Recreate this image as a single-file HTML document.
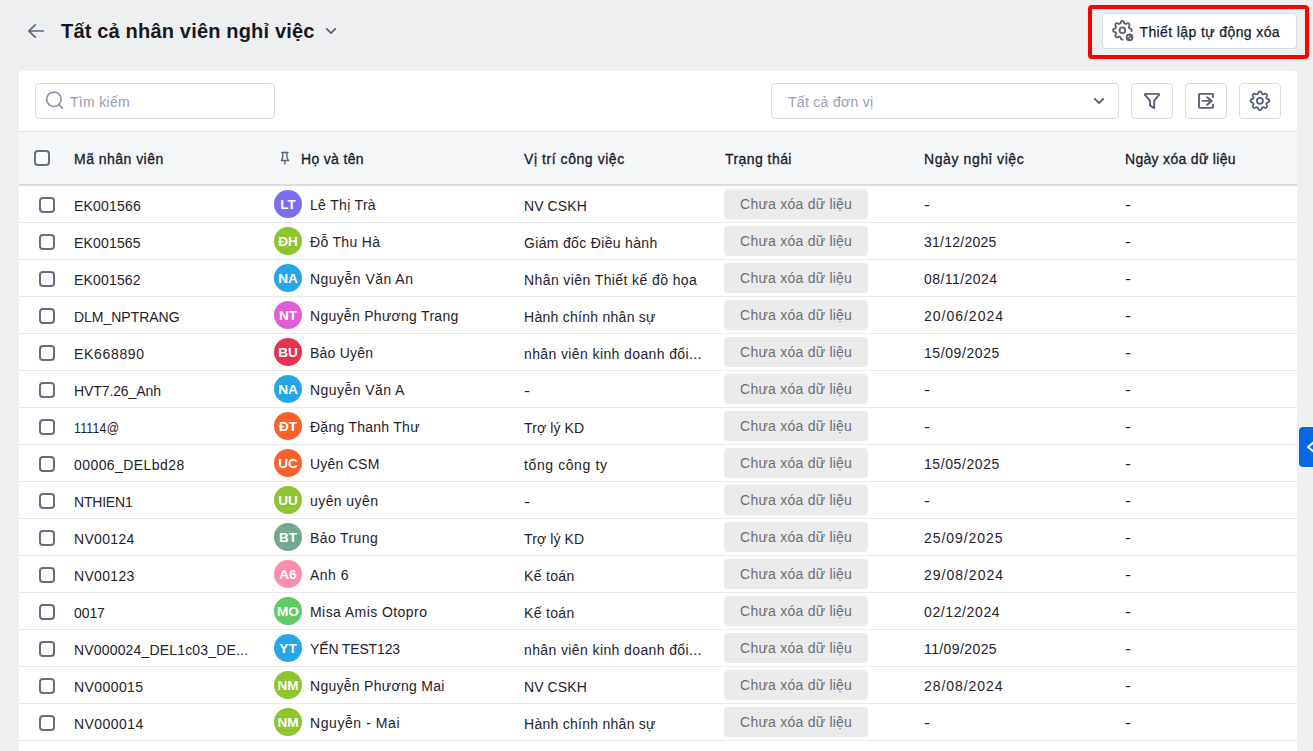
<!DOCTYPE html>
<html lang="vi">
<head>
<meta charset="utf-8">
<title>Tất cả nhân viên nghỉ việc</title>
<style>
*{box-sizing:border-box;margin:0;padding:0}
html,body{width:1313px;height:751px;overflow:hidden}
body{background:#eeeff1;font-family:"Liberation Sans",sans-serif;color:#1f2229;font-size:14px;position:relative}
.abs{position:absolute}
.title{left:61px;top:18px;font-size:20px;font-weight:bold;color:#16181d;line-height:26px;white-space:nowrap;letter-spacing:0.18px}
.redbox{left:1088px;top:5px;width:221px;height:54px;border:4px solid #fe0000;border-radius:4px}
.btn-auto{left:1102px;top:13px;width:195px;height:36px;background:#fff;border:1px solid #d9dbe3;border-radius:4px}
.btn-auto span{position:absolute;left:36.5px;top:10px;font-size:14px;line-height:17px;color:#171b2a;white-space:nowrap;letter-spacing:.39px;-webkit-text-stroke:.25px #171b2a}
.card{left:19px;top:71px;width:1278px;height:700px;background:#fff;border-radius:4px 4px 0 0;overflow:hidden}
.search{left:16px;top:12px;width:240px;height:36px;border:1px solid #d9dbe3;border-radius:4px;background:#fff}
.search span{position:absolute;left:34px;top:10px;color:#9a9eb3;font-size:14px;line-height:17px;letter-spacing:.3px}
.select{left:752px;top:12px;width:348px;height:36px;border:1px solid #d9dbe3;border-radius:4px;background:#fff}
.select span{position:absolute;left:16px;top:10px;color:#9a9eb3;font-size:14px;line-height:17px;letter-spacing:.3px}
.ib{top:12px;width:42px;height:36px;border:1px solid #d9dbe3;border-radius:4px;background:#fff}
.thead{left:0;top:60px;width:1278px;height:55px;background:#f5f6f8;border-top:1px solid #dfe0e8;border-bottom:2px solid #d9dbe3}
.th{position:absolute;top:19px;font-size:14px;line-height:17px;font-weight:normal;color:#171b2a;white-space:nowrap;letter-spacing:.42px;-webkit-text-stroke:.3px #171b2a}
.cb{position:absolute;width:16px;height:16px;border:2px solid #676d81;border-radius:4px;background:#fff}
.row{position:absolute;left:0;width:1278px;height:37px;border-bottom:1px solid #e8e9ef}
.row span{position:absolute;top:11px;line-height:17px;white-space:nowrap;letter-spacing:.35px;color:#1f2229}
.row .c1{left:55px;top:12px}
.row .c2{left:291px}
.row .c3{left:505px;top:12px}
.row .c5{left:905px}
.row .c6{left:1106px}
.row .d{transform:scaleX(1.3);transform-origin:0 50%}
.av{position:absolute;left:255px;top:4px;width:28px;height:28px;border-radius:50%;color:#fff;font-size:13.6px;font-weight:bold;text-align:center;line-height:29.4px;overflow:hidden}
.tag{position:absolute;left:705px;top:3px;width:144px;height:30px;border-radius:4px;background:#ebebeb;color:#6b6e76;text-align:center;line-height:30px;letter-spacing:.24px;text-indent:.24px}
.tab{left:1299px;top:427px;width:20px;height:40px;background:#0768e4;border-radius:4px 0 0 4px;box-shadow:0 0 0 1px rgba(255,255,255,.55)}
</style>
</head>
<body>
<div class="abs title">Tất cả nhân viên nghỉ việc</div>
<div class="abs redbox"></div>
<div class="abs btn-auto"><span>Thiết lập tự động xóa</span></div>
<div class="abs card">
  <div class="abs search"><span>Tìm kiếm</span></div>
  <div class="abs select"><span>Tất cả đơn vị</span></div>
  <div class="abs ib" style="left:1112px"></div>
  <div class="abs ib" style="left:1166px"></div>
  <div class="abs ib" style="left:1220px"></div>
  <div class="abs thead">
    <div class="cb" style="left:15px;top:18px"></div>
    <div class="th" style="left:55px;letter-spacing:0.47px">Mã nhân viên</div>
    <div class="th" style="left:282px;letter-spacing:0.33px">Họ và tên</div>
    <div class="th" style="left:505px;letter-spacing:0.56px">Vị trí công việc</div>
    <div class="th" style="left:706px;letter-spacing:0.44px">Trạng thái</div>
    <div class="th" style="left:905px;letter-spacing:0.61px">Ngày nghỉ việc</div>
    <div class="th" style="left:1106px;letter-spacing:0.31px">Ngày xóa dữ liệu</div>
  </div>
    <div class="row" style="top:115px"><div class="cb" style="left:20px;top:11px"></div><span class="c1" style="letter-spacing:0.20px">EK001566</span><div class="av" style="background:#7b6df0">LT</div><span class="c2" style="letter-spacing:0.32px">Lê Thị Trà</span><span class="c3" style="letter-spacing:0.09px">NV CSKH</span><div class="tag">Chưa xóa dữ liệu</div><span class="c5 d">-</span><span class="c6 d">-</span></div>
  <div class="row" style="top:152px"><div class="cb" style="left:20px;top:11px"></div><span class="c1" style="letter-spacing:0.17px">EK001565</span><div class="av" style="background:#8dc52f">ĐH</div><span class="c2" style="letter-spacing:0.32px">Đỗ Thu Hà</span><span class="c3" style="letter-spacing:0.33px">Giám đốc Điều hành</span><div class="tag">Chưa xóa dữ liệu</div><span class="c5" style="letter-spacing:0.25px">31/12/2025</span><span class="c6 d">-</span></div>
  <div class="row" style="top:189px"><div class="cb" style="left:20px;top:11px"></div><span class="c1" style="letter-spacing:0.17px">EK001562</span><div class="av" style="background:#26a6e9">NA</div><span class="c2" style="letter-spacing:0.47px">Nguyễn Văn An</span><span class="c3" style="letter-spacing:0.40px">Nhân viên Thiết kế đồ họa</span><div class="tag">Chưa xóa dữ liệu</div><span class="c5" style="letter-spacing:0.44px">08/11/2024</span><span class="c6 d">-</span></div>
  <div class="row" style="top:226px"><div class="cb" style="left:20px;top:11px"></div><span class="c1" style="letter-spacing:-0.02px">DLM_NPTRANG</span><div class="av" style="background:#e05fd9">NT</div><span class="c2" style="letter-spacing:0.29px">Nguyễn Phương Trang</span><span class="c3" style="letter-spacing:0.27px">Hành chính nhân sự</span><div class="tag">Chưa xóa dữ liệu</div><span class="c5" style="letter-spacing:0.99px">20/06/2024</span><span class="c6 d">-</span></div>
  <div class="row" style="top:263px"><div class="cb" style="left:20px;top:11px"></div><span class="c1" style="letter-spacing:0.67px">EK668890</span><div class="av" style="background:#e23452">BU</div><span class="c2" style="letter-spacing:0.21px">Bảo Uyên</span><span class="c3" style="letter-spacing:0.39px">nhân viên kinh doanh đổi...</span><div class="tag">Chưa xóa dữ liệu</div><span class="c5" style="letter-spacing:0.58px">15/09/2025</span><span class="c6 d">-</span></div>
  <div class="row" style="top:300px"><div class="cb" style="left:20px;top:11px"></div><span class="c1" style="letter-spacing:-0.10px">HVT7.26_Anh</span><div class="av" style="background:#26a6e9">NA</div><span class="c2" style="letter-spacing:0.45px">Nguyễn Văn A</span><span class="c3 d">-</span><div class="tag">Chưa xóa dữ liệu</div><span class="c5 d">-</span><span class="c6 d">-</span></div>
  <div class="row" style="top:337px"><div class="cb" style="left:20px;top:11px"></div><span class="c1" style="letter-spacing:.3px;transform:scaleX(.875);transform-origin:0 50%">11114@</span><div class="av" style="background:#f9622e">ĐT</div><span class="c2" style="letter-spacing:0.26px">Đặng Thanh Thư</span><span class="c3" style="letter-spacing:0.11px">Trợ lý KD</span><div class="tag">Chưa xóa dữ liệu</div><span class="c5 d">-</span><span class="c6 d">-</span></div>
  <div class="row" style="top:374px"><div class="cb" style="left:20px;top:11px"></div><span class="c1" style="letter-spacing:0.43px">00006_DELbd28</span><div class="av" style="background:#f9622e">UC</div><span class="c2" style="letter-spacing:0.24px">Uyên CSM</span><span class="c3" style="letter-spacing:0.60px">tổng công ty</span><div class="tag">Chưa xóa dữ liệu</div><span class="c5" style="letter-spacing:0.58px">15/05/2025</span><span class="c6 d">-</span></div>
  <div class="row" style="top:411px"><div class="cb" style="left:20px;top:11px"></div><span class="c1" style="letter-spacing:-0.20px">NTHIEN1</span><div class="av" style="background:#8dc52f">UU</div><span class="c2" style="letter-spacing:0.42px">uyên uyên</span><span class="c3 d">-</span><div class="tag">Chưa xóa dữ liệu</div><span class="c5 d">-</span><span class="c6 d">-</span></div>
  <div class="row" style="top:448px"><div class="cb" style="left:20px;top:11px"></div><span class="c1" style="letter-spacing:0.33px">NV00124</span><div class="av" style="background:#75a68e">BT</div><span class="c2" style="letter-spacing:0.39px">Bảo Trung</span><span class="c3" style="letter-spacing:0.11px">Trợ lý KD</span><div class="tag">Chưa xóa dữ liệu</div><span class="c5" style="letter-spacing:0.93px">25/09/2025</span><span class="c6 d">-</span></div>
  <div class="row" style="top:485px"><div class="cb" style="left:20px;top:11px"></div><span class="c1" style="letter-spacing:0.33px">NV00123</span><div class="av" style="background:#f98fab">A6</div><span class="c2" style="letter-spacing:0.48px">Anh 6</span><span class="c3" style="letter-spacing:0.32px">Kế toán</span><div class="tag">Chưa xóa dữ liệu</div><span class="c5" style="letter-spacing:0.99px">29/08/2024</span><span class="c6 d">-</span></div>
  <div class="row" style="top:522px"><div class="cb" style="left:20px;top:11px"></div><span class="c1" style="letter-spacing:-0.08px">0017</span><div class="av" style="background:#5fcc66">MO</div><span class="c2" style="letter-spacing:0.43px">Misa Amis Otopro</span><span class="c3" style="letter-spacing:0.32px">Kế toán</span><div class="tag">Chưa xóa dữ liệu</div><span class="c5" style="letter-spacing:0.61px">02/12/2024</span><span class="c6 d">-</span></div>
  <div class="row" style="top:559px"><div class="cb" style="left:20px;top:11px"></div><span class="c1" style="letter-spacing:0.17px">NV000024_DEL1c03_DE...</span><div class="av" style="background:#26a6e9">YT</div><span class="c2" style="letter-spacing:-0.15px">YẾN TEST123</span><span class="c3" style="letter-spacing:0.39px">nhân viên kinh doanh đổi...</span><div class="tag">Chưa xóa dữ liệu</div><span class="c5" style="letter-spacing:0.40px">11/09/2025</span><span class="c6 d">-</span></div>
  <div class="row" style="top:596px"><div class="cb" style="left:20px;top:11px"></div><span class="c1" style="letter-spacing:0.42px">NV000015</span><div class="av" style="background:#8dc52f">NM</div><span class="c2" style="letter-spacing:0.28px">Nguyễn Phương Mai</span><span class="c3" style="letter-spacing:0.09px">NV CSKH</span><div class="tag">Chưa xóa dữ liệu</div><span class="c5" style="letter-spacing:0.95px">28/08/2024</span><span class="c6 d">-</span></div>
  <div class="row" style="top:633px"><div class="cb" style="left:20px;top:11px"></div><span class="c1" style="letter-spacing:0.46px">NV000014</span><div class="av" style="background:#8dc52f">NM</div><span class="c2" style="letter-spacing:0.57px">Nguyễn - Mai</span><span class="c3" style="letter-spacing:0.27px">Hành chính nhân sự</span><div class="tag">Chưa xóa dữ liệu</div><span class="c5 d">-</span><span class="c6 d">-</span></div>
</div>
<div class="abs tab"></div>
<svg class="abs" style="left:0;top:0;pointer-events:none" width="1313" height="751" viewBox="0 0 1313 751" fill="none" stroke="#5c6176" stroke-width="1.7" stroke-linecap="round" stroke-linejoin="round">
<path d="M43.2 31H28.8M35.2 24.9L28.8 31l6.4 6.2" stroke-width="1.7"/>
<path d="M326.7 28.8L331 33.2l4.3-4.4" stroke-width="1.7"/>
<g stroke="#8f94a8" stroke-width="1.7"><circle cx="53.9" cy="99.3" r="7.2"/><path d="M59.2 104.8L62.6 108.4"/></g>
<path d="M1094.8 98.8L1099 103l4.2-4.2" stroke-width="1.9"/>
<path d="M1145.8 93.9H1158.2Q1159.7 93.9 1158.9 95.1L1154.2 100.7V108.2L1150 105.4V100.7L1145.1 95.1Q1144.3 93.9 1145.8 93.9Z" stroke-width="1.9"/>
<path d="M1213 97.2V94.7a.8 .8 0 0 0-.8-.8H1199.8a.8 .8 0 0 0-.8 .8V107.1a.8 .8 0 0 0 .8 .8H1212.2a.8 .8 0 0 0 .8-.8V104.6M1202.6 100.9H1211" stroke-width="1.9"/>
<path d="M1207.2 97.3L1211.6 100.9L1207.2 104.8" stroke-width="2.1"/>
<path d="M1269.22 100.80 L1269.21 100.96 L1269.19 101.12 L1269.15 101.28 L1269.09 101.44 L1269.02 101.60 L1268.93 101.75 L1268.82 101.90 L1268.70 102.04 L1268.55 102.17 L1268.36 102.29 L1268.10 102.39 L1267.64 102.44 L1267.42 102.54 L1267.25 102.63 L1267.11 102.73 L1266.98 102.83 L1266.86 102.93 L1266.76 103.03 L1266.67 103.13 L1266.59 103.24 L1266.52 103.34 L1266.47 103.45 L1266.42 103.57 L1266.38 103.69 L1266.35 103.81 L1266.34 103.94 L1266.33 104.07 L1266.33 104.22 L1266.34 104.37 L1266.36 104.53 L1266.40 104.70 L1266.45 104.89 L1266.53 105.11 L1266.82 105.47 L1266.94 105.73 L1266.98 105.95 L1266.99 106.15 L1266.98 106.33 L1266.96 106.51 L1266.91 106.68 L1266.85 106.85 L1266.78 107.00 L1266.70 107.14 L1266.60 107.27 L1266.49 107.39 L1266.37 107.50 L1266.24 107.60 L1266.10 107.68 L1265.95 107.75 L1265.78 107.81 L1265.61 107.86 L1265.43 107.88 L1265.25 107.89 L1265.05 107.88 L1264.83 107.84 L1264.57 107.72 L1264.21 107.43 L1263.99 107.35 L1263.80 107.30 L1263.63 107.26 L1263.47 107.24 L1263.32 107.23 L1263.17 107.23 L1263.04 107.24 L1262.91 107.25 L1262.79 107.28 L1262.67 107.32 L1262.55 107.37 L1262.44 107.42 L1262.34 107.49 L1262.23 107.57 L1262.13 107.66 L1262.03 107.76 L1261.93 107.88 L1261.83 108.01 L1261.73 108.15 L1261.64 108.32 L1261.54 108.54 L1261.49 109.00 L1261.39 109.26 L1261.27 109.45 L1261.14 109.60 L1261.00 109.72 L1260.85 109.83 L1260.70 109.92 L1260.54 109.99 L1260.38 110.05 L1260.22 110.09 L1260.06 110.11 L1259.90 110.12 L1259.74 110.11 L1259.58 110.09 L1259.42 110.05 L1259.26 109.99 L1259.10 109.92 L1258.95 109.83 L1258.80 109.72 L1258.66 109.60 L1258.53 109.45 L1258.41 109.26 L1258.31 109.00 L1258.26 108.54 L1258.16 108.32 L1258.07 108.15 L1257.97 108.01 L1257.87 107.88 L1257.77 107.76 L1257.67 107.66 L1257.57 107.57 L1257.46 107.49 L1257.36 107.42 L1257.25 107.37 L1257.13 107.32 L1257.01 107.28 L1256.89 107.25 L1256.76 107.24 L1256.63 107.23 L1256.48 107.23 L1256.33 107.24 L1256.17 107.26 L1256.00 107.30 L1255.81 107.35 L1255.59 107.43 L1255.23 107.72 L1254.97 107.84 L1254.75 107.88 L1254.55 107.89 L1254.37 107.88 L1254.19 107.86 L1254.02 107.81 L1253.85 107.75 L1253.70 107.68 L1253.56 107.60 L1253.43 107.50 L1253.31 107.39 L1253.20 107.27 L1253.10 107.14 L1253.02 107.00 L1252.95 106.85 L1252.89 106.68 L1252.84 106.51 L1252.82 106.33 L1252.81 106.15 L1252.82 105.95 L1252.86 105.73 L1252.98 105.47 L1253.27 105.11 L1253.35 104.89 L1253.40 104.70 L1253.44 104.53 L1253.46 104.37 L1253.47 104.22 L1253.47 104.07 L1253.46 103.94 L1253.45 103.81 L1253.42 103.69 L1253.38 103.57 L1253.33 103.45 L1253.28 103.34 L1253.21 103.24 L1253.13 103.13 L1253.04 103.03 L1252.94 102.93 L1252.82 102.83 L1252.69 102.73 L1252.55 102.63 L1252.38 102.54 L1252.16 102.44 L1251.70 102.39 L1251.44 102.29 L1251.25 102.17 L1251.10 102.04 L1250.98 101.90 L1250.87 101.75 L1250.78 101.60 L1250.71 101.44 L1250.65 101.28 L1250.61 101.12 L1250.59 100.96 L1250.58 100.80 L1250.59 100.64 L1250.61 100.48 L1250.65 100.32 L1250.71 100.16 L1250.78 100.00 L1250.87 99.85 L1250.98 99.70 L1251.10 99.56 L1251.25 99.43 L1251.44 99.31 L1251.70 99.21 L1252.16 99.16 L1252.38 99.06 L1252.55 98.97 L1252.69 98.87 L1252.82 98.77 L1252.94 98.67 L1253.04 98.57 L1253.13 98.47 L1253.21 98.36 L1253.28 98.26 L1253.33 98.15 L1253.38 98.03 L1253.42 97.91 L1253.45 97.79 L1253.46 97.66 L1253.47 97.53 L1253.47 97.38 L1253.46 97.23 L1253.44 97.07 L1253.40 96.90 L1253.35 96.71 L1253.27 96.49 L1252.98 96.13 L1252.86 95.87 L1252.82 95.65 L1252.81 95.45 L1252.82 95.27 L1252.84 95.09 L1252.89 94.92 L1252.95 94.75 L1253.02 94.60 L1253.10 94.46 L1253.20 94.33 L1253.31 94.21 L1253.43 94.10 L1253.56 94.00 L1253.70 93.92 L1253.85 93.85 L1254.02 93.79 L1254.19 93.74 L1254.37 93.72 L1254.55 93.71 L1254.75 93.72 L1254.97 93.76 L1255.23 93.88 L1255.59 94.17 L1255.81 94.25 L1256.00 94.30 L1256.17 94.34 L1256.33 94.36 L1256.48 94.37 L1256.63 94.37 L1256.76 94.36 L1256.89 94.35 L1257.01 94.32 L1257.13 94.28 L1257.25 94.23 L1257.36 94.18 L1257.46 94.11 L1257.57 94.03 L1257.67 93.94 L1257.77 93.84 L1257.87 93.72 L1257.97 93.59 L1258.07 93.45 L1258.16 93.28 L1258.26 93.06 L1258.31 92.60 L1258.41 92.34 L1258.53 92.15 L1258.66 92.00 L1258.80 91.88 L1258.95 91.77 L1259.10 91.68 L1259.26 91.61 L1259.42 91.55 L1259.58 91.51 L1259.74 91.49 L1259.90 91.48 L1260.06 91.49 L1260.22 91.51 L1260.38 91.55 L1260.54 91.61 L1260.70 91.68 L1260.85 91.77 L1261.00 91.88 L1261.14 92.00 L1261.27 92.15 L1261.39 92.34 L1261.49 92.60 L1261.54 93.06 L1261.64 93.28 L1261.73 93.45 L1261.83 93.59 L1261.93 93.72 L1262.03 93.84 L1262.13 93.94 L1262.23 94.03 L1262.34 94.11 L1262.44 94.18 L1262.55 94.23 L1262.67 94.28 L1262.79 94.32 L1262.91 94.35 L1263.04 94.36 L1263.17 94.37 L1263.32 94.37 L1263.47 94.36 L1263.63 94.34 L1263.80 94.30 L1263.99 94.25 L1264.21 94.17 L1264.57 93.88 L1264.83 93.76 L1265.05 93.72 L1265.25 93.71 L1265.43 93.72 L1265.61 93.74 L1265.78 93.79 L1265.95 93.85 L1266.10 93.92 L1266.24 94.00 L1266.37 94.10 L1266.49 94.21 L1266.60 94.33 L1266.70 94.46 L1266.78 94.60 L1266.85 94.75 L1266.91 94.92 L1266.96 95.09 L1266.98 95.27 L1266.99 95.45 L1266.98 95.65 L1266.94 95.87 L1266.82 96.13 L1266.53 96.49 L1266.45 96.71 L1266.40 96.90 L1266.36 97.07 L1266.34 97.23 L1266.33 97.38 L1266.33 97.53 L1266.34 97.66 L1266.35 97.79 L1266.38 97.91 L1266.42 98.03 L1266.47 98.15 L1266.52 98.26 L1266.59 98.36 L1266.67 98.47 L1266.76 98.57 L1266.86 98.67 L1266.98 98.77 L1267.11 98.87 L1267.25 98.97 L1267.42 99.06 L1267.64 99.16 L1268.10 99.21 L1268.36 99.31 L1268.55 99.43 L1268.70 99.56 L1268.82 99.70 L1268.93 99.85 L1269.02 100.00 L1269.09 100.16 L1269.15 100.32 L1269.19 100.48 L1269.21 100.64 L1269.22 100.80Z" stroke-width="1.85"/><circle cx="1259.9" cy="100.8" r="3.0" stroke-width="1.85"/>
<path d="M1122.72 39.59 L1122.56 39.61 L1122.40 39.62 L1122.24 39.61 L1122.08 39.59 L1121.92 39.55 L1121.76 39.49 L1121.60 39.42 L1121.45 39.33 L1121.30 39.22 L1121.16 39.10 L1121.03 38.95 L1120.91 38.76 L1120.81 38.50 L1120.76 38.04 L1120.66 37.82 L1120.57 37.65 L1120.47 37.51 L1120.37 37.38 L1120.27 37.26 L1120.17 37.16 L1120.07 37.07 L1119.96 36.99 L1119.86 36.92 L1119.75 36.87 L1119.63 36.82 L1119.51 36.78 L1119.39 36.75 L1119.26 36.74 L1119.13 36.73 L1118.98 36.73 L1118.83 36.74 L1118.67 36.76 L1118.50 36.80 L1118.31 36.85 L1118.09 36.93 L1117.73 37.22 L1117.47 37.34 L1117.25 37.38 L1117.05 37.39 L1116.87 37.38 L1116.69 37.36 L1116.52 37.31 L1116.35 37.25 L1116.20 37.18 L1116.06 37.10 L1115.93 37.00 L1115.81 36.89 L1115.70 36.77 L1115.60 36.64 L1115.52 36.50 L1115.45 36.35 L1115.39 36.18 L1115.34 36.01 L1115.32 35.83 L1115.31 35.65 L1115.32 35.45 L1115.36 35.23 L1115.48 34.97 L1115.77 34.61 L1115.85 34.39 L1115.90 34.20 L1115.94 34.03 L1115.96 33.87 L1115.97 33.72 L1115.97 33.57 L1115.96 33.44 L1115.95 33.31 L1115.92 33.19 L1115.88 33.07 L1115.83 32.95 L1115.78 32.84 L1115.71 32.74 L1115.63 32.63 L1115.54 32.53 L1115.44 32.43 L1115.32 32.33 L1115.19 32.23 L1115.05 32.13 L1114.88 32.04 L1114.66 31.94 L1114.20 31.89 L1113.94 31.79 L1113.75 31.67 L1113.60 31.54 L1113.48 31.40 L1113.37 31.25 L1113.28 31.10 L1113.21 30.94 L1113.15 30.78 L1113.11 30.62 L1113.09 30.46 L1113.08 30.30 L1113.09 30.14 L1113.11 29.98 L1113.15 29.82 L1113.21 29.66 L1113.28 29.50 L1113.37 29.35 L1113.48 29.20 L1113.60 29.06 L1113.75 28.93 L1113.94 28.81 L1114.20 28.71 L1114.66 28.66 L1114.88 28.56 L1115.05 28.47 L1115.19 28.37 L1115.32 28.27 L1115.44 28.17 L1115.54 28.07 L1115.63 27.97 L1115.71 27.86 L1115.78 27.76 L1115.83 27.65 L1115.88 27.53 L1115.92 27.41 L1115.95 27.29 L1115.96 27.16 L1115.97 27.03 L1115.97 26.88 L1115.96 26.73 L1115.94 26.57 L1115.90 26.40 L1115.85 26.21 L1115.77 25.99 L1115.48 25.63 L1115.36 25.37 L1115.32 25.15 L1115.31 24.95 L1115.32 24.77 L1115.34 24.59 L1115.39 24.42 L1115.45 24.25 L1115.52 24.10 L1115.60 23.96 L1115.70 23.83 L1115.81 23.71 L1115.93 23.60 L1116.06 23.50 L1116.20 23.42 L1116.35 23.35 L1116.52 23.29 L1116.69 23.24 L1116.87 23.22 L1117.05 23.21 L1117.25 23.22 L1117.47 23.26 L1117.73 23.38 L1118.09 23.67 L1118.31 23.75 L1118.50 23.80 L1118.67 23.84 L1118.83 23.86 L1118.98 23.87 L1119.13 23.87 L1119.26 23.86 L1119.39 23.85 L1119.51 23.82 L1119.63 23.78 L1119.75 23.73 L1119.86 23.68 L1119.96 23.61 L1120.07 23.53 L1120.17 23.44 L1120.27 23.34 L1120.37 23.22 L1120.47 23.09 L1120.57 22.95 L1120.66 22.78 L1120.76 22.56 L1120.81 22.10 L1120.91 21.84 L1121.03 21.65 L1121.16 21.50 L1121.30 21.38 L1121.45 21.27 L1121.60 21.18 L1121.76 21.11 L1121.92 21.05 L1122.08 21.01 L1122.24 20.99 L1122.40 20.98 L1122.56 20.99 L1122.72 21.01 L1122.88 21.05 L1123.04 21.11 L1123.20 21.18 L1123.35 21.27 L1123.50 21.38 L1123.64 21.50 L1123.77 21.65 L1123.89 21.84 L1123.99 22.10 L1124.04 22.56 L1124.14 22.78 L1124.23 22.95 L1124.33 23.09 L1124.43 23.22 L1124.53 23.34 L1124.63 23.44 L1124.73 23.53 L1124.84 23.61 L1124.94 23.68 L1125.05 23.73 L1125.17 23.78 L1125.29 23.82 L1125.41 23.85 L1125.54 23.86 L1125.67 23.87 L1125.82 23.87 L1125.97 23.86 L1126.13 23.84 L1126.30 23.80 L1126.49 23.75 L1126.71 23.67 L1127.07 23.38 L1127.33 23.26 L1127.55 23.22 L1127.75 23.21 L1127.93 23.22 L1128.11 23.24 L1128.28 23.29 L1128.45 23.35 L1128.60 23.42 L1128.74 23.50 L1128.87 23.60 L1128.99 23.71 L1129.10 23.83 L1129.20 23.96 L1129.28 24.10 L1129.35 24.25 L1129.41 24.42 L1129.46 24.59 L1129.48 24.77 L1129.49 24.95 L1129.48 25.15 L1129.44 25.37 L1129.32 25.63 L1129.03 25.99 L1128.95 26.21 L1128.90 26.40 L1128.86 26.57 L1128.84 26.73 L1128.83 26.88 L1128.83 27.03 L1128.84 27.16 L1128.85 27.29 L1128.88 27.41 L1128.92 27.53 L1128.97 27.65 L1129.02 27.76 L1129.09 27.86 L1129.17 27.97 L1129.26 28.07 L1129.36 28.17 L1129.48 28.27 L1129.61 28.37 L1129.75 28.47 L1129.92 28.56 L1130.14 28.66 L1130.60 28.71 L1130.86 28.81 L1131.05 28.93 L1131.20 29.06 L1131.32 29.20 L1131.43 29.35 L1131.52 29.50 L1131.59 29.66 L1131.65 29.82 L1131.69 29.98 L1131.71 30.14 L1131.72 30.30 L1131.71 30.46 L1131.69 30.62 L1131.65 30.78 L1131.59 30.94 L1131.52 31.10" stroke-width="1.85"/><circle cx="1122.4" cy="30.3" r="2.85" stroke-width="1.85"/>
<circle cx="1129.55" cy="37.4" r="3.8" fill="#5c6176" stroke="none"/><g fill="#fff" stroke="none"><ellipse cx="1128.5" cy="36.55" rx="1.25" ry=".55" transform="rotate(-45 1128.5 36.55)"/><ellipse cx="1130.5" cy="38.4" rx="1.25" ry=".55" transform="rotate(-45 1130.5 38.4)"/></g>
<g stroke-width="1.35"><path d="M281.7 152.5H288M282.7 152.5V157.6L281.4 160.5H288.6L286.9 157.6V152.5M284.9 160.5V164"/></g>
<path d="M1314.5 441.6L1308 447l6.5 5.4" stroke="#fff" stroke-width="2.1"/>
</svg>
</body>
</html>
